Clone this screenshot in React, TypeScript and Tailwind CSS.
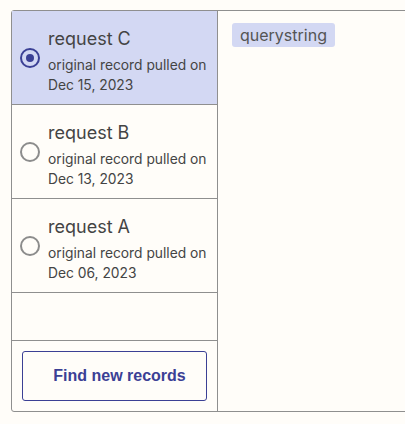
const requests = [
  { id: 'c', name: 'request C', date: 'Dec 15, 2023' },
  { id: 'b', name: 'request B', date: 'Dec 13, 2023' },
  { id: 'a', name: 'request A', date: 'Dec 06, 2023' },
];

function Radio({ checked }: { checked: boolean }) {
  return (
    <span
      className={`flex h-[20px] w-[20px] shrink-0 items-center justify-center rounded-full border-2 ${
        checked ? 'border-[#3b4095]' : 'border-[#8c8c8c]'
      }`}
    >
      {checked && <span className="h-[8px] w-[8px] rounded-full bg-[#3b4095]" />}
    </span>
  );
}

export default function App() {
  const selected = 'c';

  return (
    <div className="min-h-screen w-screen overflow-hidden bg-[#fffdf9] pl-[11px] pt-[10px] font-['Inter',sans-serif] text-[#404040]">
      <div className="flex h-[402px] w-[420px] rounded-l-[3px] border border-[#8f8f8f]">
        {/* request list */}
        <div className="flex w-[206px] flex-col border-r border-[#8f8f8f]">
          {requests.map((r) => {
            const isSelected = r.id === selected;
            return (
              <label
                key={r.id}
                className={`flex h-[94px] items-center gap-[8px] border-b border-[#8f8f8f] px-[8px] ${
                  isSelected ? 'bg-[#d3d8f3]' : ''
                }`}
              >
                <Radio checked={isSelected} />
                <div className="pt-[6px]">
                  <div className="text-[18px] leading-[24px] text-[#444]">{r.name}</div>
                  <div className="mt-[4px] text-[13.8px] leading-[20px] text-[#444]">original record pulled on</div>
                  <div className="text-[13.8px] leading-[20px] text-[#444]">{r.date}</div>
                </div>
              </label>
            );
          })}
          <div className="h-[48px] border-b border-[#8f8f8f]" />
          <div className="flex-1 p-[10px]">
            <button className="h-[50px] w-full rounded-[3px] border border-[#3b4095] pl-[10px] font-['Liberation_Sans',Arial,sans-serif] text-[16px] font-bold text-[#3b4095]">
              Find new records
            </button>
          </div>
        </div>

        {/* detail */}
        <div className="flex-1 px-[14px] pt-[12px]">
          <span className="inline-block rounded-[3px] bg-[#d3d8f3] px-[8px] text-[16px] leading-[24px] text-[#555]">
            querystring
          </span>
        </div>
      </div>
    </div>
  );
}
